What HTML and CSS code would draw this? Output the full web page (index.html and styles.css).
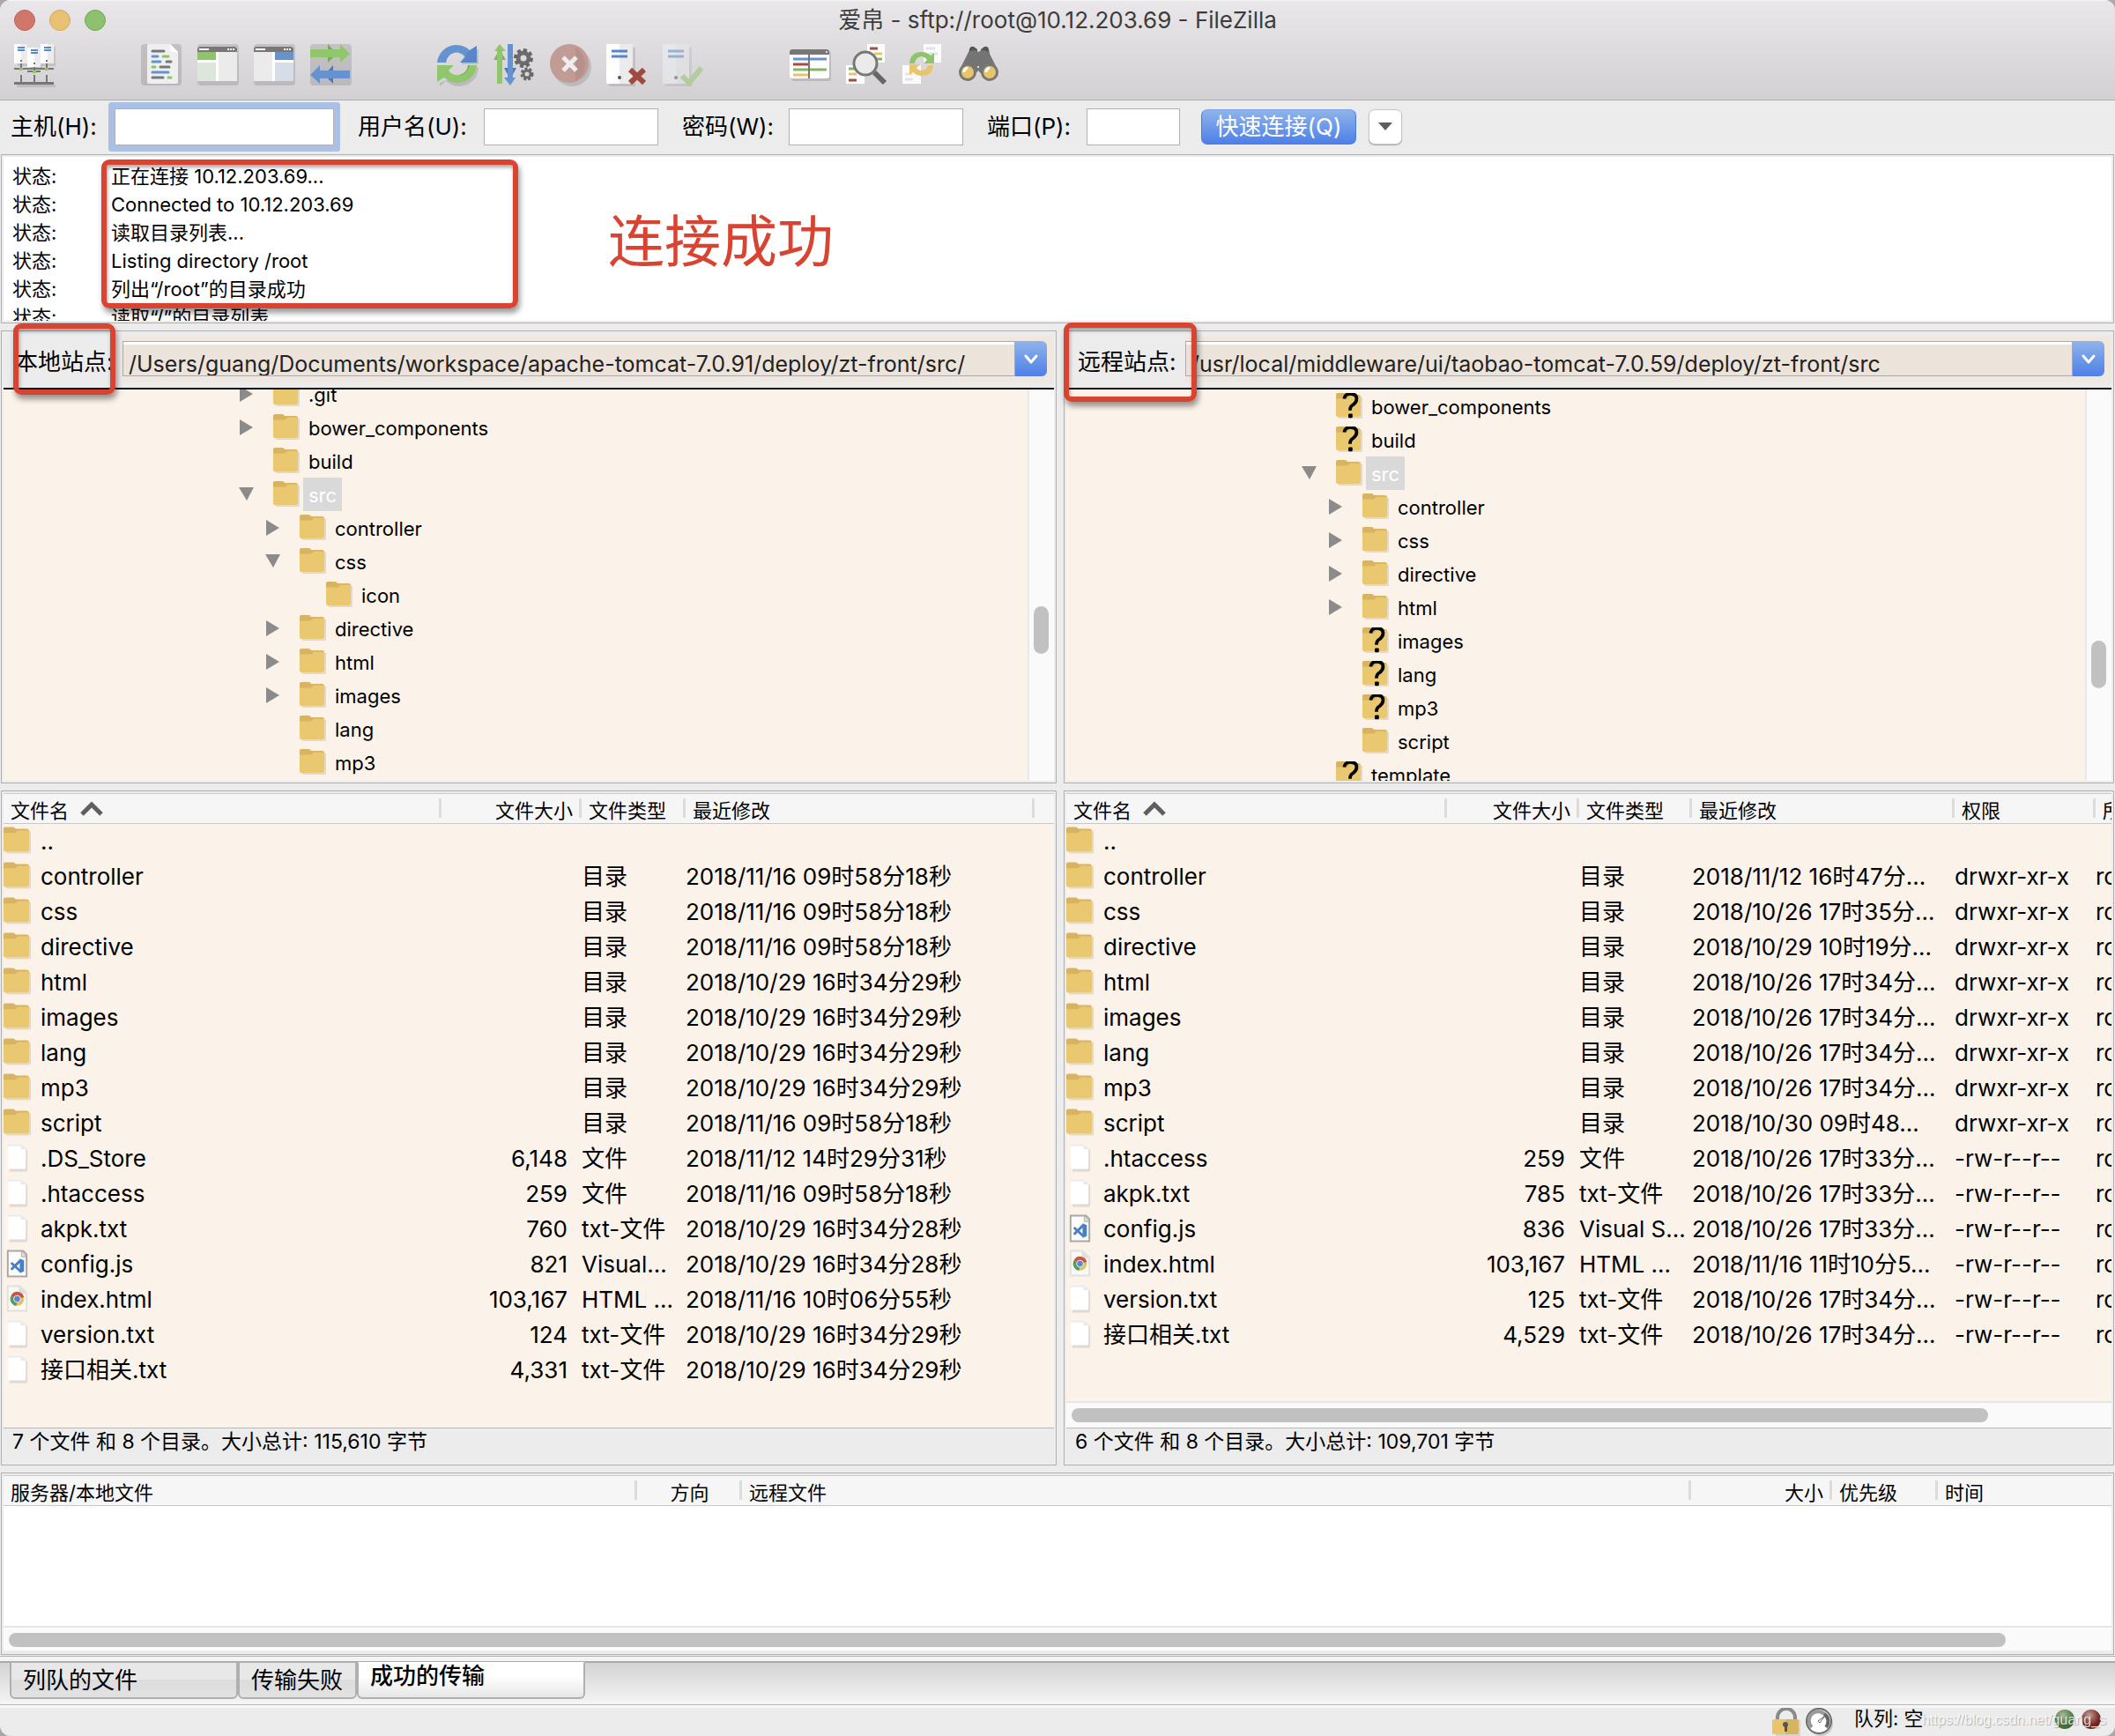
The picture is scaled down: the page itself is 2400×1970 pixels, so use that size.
FILE: index.html
```html
<!DOCTYPE html>
<html lang="zh-CN">
<head>
<meta charset="utf-8">
<title>爱帛 - sftp://root@10.12.203.69 - FileZilla</title>
<link rel="stylesheet" href="styles.css">
</head>
<body>
<svg class="sprite" aria-hidden="true">
  <symbol id="folder" viewBox="0 0 32 32">
    <path d="M2 29h28V5h2v24q0 2-2 2H4z" fill="#000" opacity=".1"/>
    <path d="M0 2q0-2 2-2h9q2 0 3 2h13q3 0 3 3v10H0z" fill="#d8b362"/>
    <path d="M0 7h13q2 0 3-2 0-1 2-1h10q2 0 2 2v20q0 3-3 3H3q-3 0-3-3z" fill="#eac870"/>
  </symbol>
  <symbol id="folder-unknown" viewBox="0 0 32 32">
    <use href="#folder" width="32" height="32"/>
    <path d="M10 7q1-6 7-6 8 0 8 6 0 4-4 7-4 2-4 7" fill="none" stroke="#000" stroke-width="4"/>
    <rect x="15" y="25" width="5" height="5" rx="1"/>
  </symbol>
  <symbol id="file" viewBox="0 0 32 32">
    <path d="M7 2h16l5 5v23q0 2-2 2H7z" fill="#000" opacity=".1"/>
    <path d="M5 2q0-2 2-2h13l6 6v21q0 2-2 2H7q-2 0-2-2z" fill="#fff"/>
    <path d="M20 0l6 6h-6zM5 0h15v2H5z" fill="#e9eaeb"/>
  </symbol>
  <symbol id="file-js" viewBox="0 0 32 32">
    <path d="M5 1h18l4 4v26H5z" fill="#fcfcfc" stroke="#aaa79f" stroke-width="2"/>
    <path d="M21 1l6 7h-6z" fill="#ddd" stroke="#b5b2ab"/>
    <path d="M9 15l11 10M9 23l11-11" stroke="#4a7fc5" stroke-width="3"/>
    <path d="M19 10l5 2v13l-5 2z" fill="#4a7fc5"/>
  </symbol>
  <symbol id="file-html" viewBox="0 0 32 32">
    <path d="M5 1h14l8 8v21H5z" fill="#f9f9f8" stroke="#e4e0da" stroke-width="2"/>
    <path d="M18 1l9 9h-9z" fill="#dfdfdd"/>
    <circle cx="16" cy="16" r="8" fill="#e6c25a"/>
    <path d="M16 16L9 12a8 8 0 0 0 6 12z" fill="#5a9a5b"/>
    <path d="M16 16l-7-4a8 8 0 0 1 15 2z" fill="#c8564b"/>
    <circle cx="16" cy="16" r="4" fill="#5d86cf" stroke="#e9eef7"/>
  </symbol>
  <symbol id="tri-right" viewBox="0 0 16 18"><path d="M0 0l15 9L0 18z" fill="#8b8b8b"/></symbol>
  <symbol id="tri-down" viewBox="0 0 18 16"><path d="M0 0h17L9 15z" fill="#8b8b8b"/></symbol>
  <symbol id="chevron" viewBox="0 0 36 40"><path d="M12 17l6 7 6-7" fill="none" stroke="#fff" stroke-width="3" stroke-linecap="round" stroke-linejoin="round"/></symbol>
  <symbol id="sort" viewBox="0 0 26 18"><path d="M2 15L13 4l11 11" fill="none" stroke="#5f5f5f" stroke-width="5"/></symbol>
</svg>

<div class="window">
  <header class="chrome">
    <div class="titlebar">
      <div class="lights">
        <button class="light close" aria-label="关闭"></button>
        <button class="light minimise" aria-label="最小化"></button>
        <button class="light zoom" aria-label="缩放"></button>
      </div>
      <h1 class="title">爱帛 - sftp://root@10.12.203.69 - FileZilla</h1>
    </div>
    <nav class="toolbar">
      <div class="group">
        <button class="tool" aria-label="站点管理器"><svg viewBox="0 0 48 48">
          <path d="M4 22v3h14v4h15v-4h14V3h-2v19M3 46h44v3H3z" fill="#000" opacity=".1"/>
          <path d="M0 0h15v22H0zM30 0h15v22H30zM15 4h15v22H15z" fill="#fff"/>
          <path d="M8 0h7v22H8zM38 0h7v22h-7zM23 4h7v22h-7z" fill="#ececec"/>
          <path d="M4 4h8M4 7h8M34 4h8M34 7h8M19 7h8M19 10h8" stroke="#5b8acb" stroke-width="2"/>
          <path d="M0 28h45M15 31h15M8 22v6M37 22v6M23 26v5M8 35v8M37 35v8M23 35v8" stroke="#777" stroke-width="2"/>
          <path d="M0 43h45v3H0z" fill="#777"/>
          <circle cx="8" cy="19" r="1" fill="#444"/><circle cx="37" cy="19" r="1" fill="#444"/><circle cx="23" cy="22" r="1" fill="#444"/>
          <path d="M6 27h4v3H6zM35 27h4v3h-4zM21 30h4v3h-4z" fill="#8dcb5e"/>
        </svg></button>
      </div>
      <div class="group">
        <button class="tool" aria-label="消息日志"><svg viewBox="0 0 48 48">
          <rect width="46" height="47" rx="4" fill="#000" opacity=".13"/>
          <path d="M9 0h24l9 9v34q0 2-2 2H9q-2 0-2-2V2q0-2 2-2z" fill="#efefef"/><path d="M33 0v7l2 2h7z" fill="#fff"/>
          <g fill="none" stroke-width="3" stroke-linecap="round"><path d="M13 8h13M29 20h5M22 26h10M13 38h12" stroke="#777"/><path d="M13 14h6M13 20h9M13 32h18" stroke="#6593cf"/><path d="M25 14h6M13 26h3M31 38h3" stroke="#8ec464"/></g>
        </svg></button>
        <button class="tool" aria-label="本地目录树"><svg viewBox="0 0 48 48">
          <rect width="47" height="47" rx="4" fill="#000" opacity=".12"/>
          <rect y="3" width="45" height="39" rx="3" fill="#fff"/><path d="M0 9V6q0-3 3-3h39q3 0 3 3v3z" fill="#777"/>
          <path d="M2 5h11v2H2zM34 5h2v2h-2zM37 5h2v2h-2zM40 5h2v2h-2z" fill="#fff"/>
          <path d="M0 9h21v9H0z" fill="#8ec46a"/><path d="M0 21h21v21H0z" fill="#dde6da"/><path d="M24 9h21v33H24z" fill="#ebebeb"/>
        </svg></button>
        <button class="tool" aria-label="远程目录树"><svg viewBox="0 0 48 48">
          <rect width="47" height="47" rx="4" fill="#000" opacity=".12"/>
          <rect y="3" width="45" height="39" rx="3" fill="#fff"/><path d="M0 9V6q0-3 3-3h39q3 0 3 3v3z" fill="#777"/>
          <path d="M2 5h11v2H2zM34 5h2v2h-2zM37 5h2v2h-2zM40 5h2v2h-2z" fill="#fff"/>
          <path d="M24 9h21v9H24z" fill="#6593cf"/><path d="M24 21h21v21H24z" fill="#d7dde6"/><path d="M0 9h21v33H0z" fill="#ebebeb"/>
        </svg></button>
        <button class="tool" aria-label="传输队列"><svg viewBox="0 0 48 48">
          <rect width="47" height="47" rx="4" fill="#000" opacity=".12"/>
          <path d="M20 0l10 11-10 10z" fill="#78ab58"/><path d="M0 6h34V0l11 11-11 10v-6H0z" fill="#91c76c"/>
          <path d="M26 24L16 35l10 10z" fill="#4d79bd"/><path d="M45 30H11v-6L0 35l11 10v-6h34z" fill="#6593cf"/>
        </svg></button>
      </div>
      <div class="group">
        <button class="tool" aria-label="刷新"><svg viewBox="0 0 48 48">
          <path d="M47 27A22 22 0 0 1 10 42l-7 6v-4l44-18zM45 6h2v17H28v-2h17z" fill="#000" opacity=".12"/>
          <path d="M10 21H0A22 22 0 0 1 37 7l8-5v19H26l6-6A12 12 0 0 0 10 21z" fill="#6593cf"/><path d="M37 7l8-5v19H26z" fill="#4d79bd" opacity=".5"/><path d="M10 21q0-9 12-12-9 1-13 12z" fill="#4d79bd"/>
          <path d="M35 24h10A22 22 0 0 1 8 38l-8 5V24h19l-6 6a12 12 0 0 0 22-6z" fill="#91c76c"/><path d="M35 24q0 9-12 12 11 0 14-12z" fill="#78ab58"/>
        </svg></button>
        <button class="tool" aria-label="处理队列"><svg viewBox="0 0 48 48">
          <path d="M7 0l7 8H1z" fill="#91c76c"/><path d="M7 6l7 12H0z" fill="#7db75a"/><path d="M4 7h6v38H4z" fill="#91c76c"/>
          <path d="M12 27h14l-7 13z" fill="#4d79bd"/><path d="M16 0h6v38h3l-6 9-7-9h4z" fill="#6593cf"/>
          <circle cx="34" cy="16" r="6" fill="none" stroke="#6d6d6d" stroke-width="5"/><circle cx="34" cy="16" r="9" fill="none" stroke="#666" stroke-width="4" stroke-dasharray="4 3"/>
          <circle cx="38" cy="34" r="4" fill="none" stroke="#6d6d6d" stroke-width="3"/><circle cx="38" cy="34" r="6" fill="none" stroke="#666" stroke-width="3" stroke-dasharray="3 2"/>
        </svg></button>
        <button class="tool" aria-label="取消"><svg viewBox="0 0 48 48">
          <circle cx="25" cy="26" r="22" fill="#000" opacity=".12"/><circle cx="22" cy="22" r="22" fill="#c09c94"/><path d="M29 4a22 22 0 0 1 0 38z" fill="#ad8b84" opacity=".6"/>
          <path d="M15 15l15 15M30 15L15 30" stroke="#eee" stroke-width="5"/>
        </svg></button>
        <button class="tool" aria-label="断开连接"><svg viewBox="0 0 48 48">
          <path d="M3 45v3h30V4h-3v41z" fill="#000" opacity=".1"/><rect width="30" height="45" rx="1" fill="#fff"/><path d="M15 0h14q1 0 1 1v43q0 1-1 1H15z" fill="#ebebeb"/>
          <path d="M6 8h18M6 14h18" stroke="#5686ca" stroke-width="3"/><circle cx="15" cy="38" r="2" fill="#555"/>
          <path d="M27 29l16 15M43 29L27 44" stroke="#a04a3f" stroke-width="6"/>
        </svg></button>
        <button class="tool" aria-label="重新连接"><svg viewBox="0 0 48 48">
          <g opacity=".5"><path d="M3 45v3h30V4h-3v41z" fill="#000" opacity=".12"/><rect width="30" height="45" rx="1" fill="#eef3f5"/><path d="M15 0h14q1 0 1 1v43q0 1-1 1H15z" fill="#e6e8e9"/>
          <path d="M6 8h18M6 14h18" stroke="#5686ca" stroke-width="3"/><circle cx="15" cy="38" r="2" fill="#555"/>
          <path d="M22 36l8 8 14-17" fill="none" stroke="#8ec464" stroke-width="6"/></g>
        </svg></button>
      </div>
      <div class="group">
        <button class="tool" aria-label="过滤"><svg viewBox="0 0 48 48">
          <rect x="2" y="8" width="45" height="34" rx="3" fill="#000" opacity=".12"/><rect y="6" width="45" height="33" rx="3" fill="#fff"/><path d="M0 12V9q0-3 3-3h39q3 0 3 3v3z" fill="#777"/><circle cx="42" cy="9" r="1" fill="#fff"/>
          <g stroke-width="3"><path d="M4 17h38" stroke="#6593cf"/><path d="M4 23h18" stroke="#a64b3f"/><path d="M4 29h38" stroke="#82b660"/><path d="M4 35h18" stroke="#e9c46a"/></g><path d="M22 12v27" stroke="#777" stroke-width="2"/>
        </svg></button>
        <button class="tool" aria-label="目录比较"><svg viewBox="0 0 48 48">
          <path d="M24 0h20v21H24zM0 24h21v21H0z" fill="#fff"/><g stroke-width="3"><path d="M27 5h9M3 41h9" stroke="#a64b3f"/><path d="M32 11h9M3 34h9" stroke="#e9c46a"/><path d="M33 17h8M3 28h9" stroke="#82b660"/></g>
          <path d="M32 32l12 12" stroke="#666" stroke-width="6"/><circle cx="22" cy="22" r="13" fill="#ebebeb" stroke="#777" stroke-width="3"/>
        </svg></button>
        <button class="tool" aria-label="同步浏览"><svg viewBox="0 0 48 48">
          <path d="M24 0h20v21H24zM0 24h21v21H0z" fill="#fbfbfb"/><path d="M27 5h10M30 11h10M3 34h8M3 40h9" stroke="#e4e4e4" stroke-width="3"/>
          <path d="M14 22H8Q9 9 22 9q6 0 10 4l4-3v12H24l4-4q-3-4-7-4-6 1-7 8z" fill="#8ec46a"/><path d="M29 24h6q-1 12-13 12-6 0-10-4l-4 3V23h12l-4 4q3 4 7 3 5-1 6-6z" fill="#e9c46a"/>
        </svg></button>
        <button class="tool" aria-label="查找文件"><svg viewBox="0 0 48 48">
          <path d="M12 6q1-4 5-3l4 3v12H10zM34 6q-1-4-5-3l-4 3v12h11z" fill="#555"/><path d="M11 9q7-4 11 0 5-4 12 0l11 22-12 11-11-12-10 12L0 31z" fill="#747474"/>
          <circle cx="10" cy="32" r="10" fill="#777"/><circle cx="35" cy="32" r="10" fill="#777"/><circle cx="10" cy="32" r="7" fill="#e9c46a"/><circle cx="35" cy="32" r="7" fill="#e9c46a"/>
          <path d="M6 32q0-4 4-5M31 32q0-4 4-5" stroke="#fff" stroke-width="3" fill="none"/><circle cx="22" cy="26" r="1" fill="#fff"/>
        </svg></button>
      </div>
    </nav>
  </header>

  <form class="quick">
    <label for="host">主机(H):</label><input id="host" class="focused" type="text">
    <label for="user">用户名(U):</label><input id="user" type="text">
    <label for="pass">密码(W):</label><input id="pass" type="password">
    <label for="port">端口(P):</label><input id="port" type="text">
    <button class="connect" type="button">快速连接(Q)</button>
    <button class="history" type="button" aria-label="历史记录"><svg viewBox="0 0 16 10"><path d="M0 0h16L8 9z" fill="#5c5c5c"/></svg></button>
  </form>

  <main class="panes">
    <section class="frame log">
      <ul>
        <li><span>状态:</span>正在连接 10.12.203.69...</li>
        <li><span>状态:</span>Connected to 10.12.203.69</li>
        <li><span>状态:</span>读取目录列表...</li>
        <li><span>状态:</span>Listing directory /root</li>
        <li><span>状态:</span>列出“/root”的目录成功</li>
        <li><span>状态:</span>读取“/”的目录列表</li>
      </ul>
    </section>

    <section class="frame site">
      <div class="address local">
        <label for="local-path">本地站点:</label>
        <div class="combo"><select id="local-path"><option>/Users/guang/Documents/workspace/apache-tomcat-7.0.91/deploy/zt-front/src/</option></select><svg class="drop" aria-hidden="true"><use href="#chevron"/></svg></div>
      </div>
      <div class="tree-area">
        <ul class="tree end">
          <li class="l1"><svg class="tw"><use href="#tri-right"/></svg><svg class="ic"><use href="#folder"/></svg><span>.git</span></li>
          <li class="l1"><svg class="tw"><use href="#tri-right"/></svg><svg class="ic"><use href="#folder"/></svg><span>bower_components</span></li>
          <li class="l1"><svg class="tw"></svg><svg class="ic"><use href="#folder"/></svg><span>build</span></li>
          <li class="l1"><svg class="tw"><use href="#tri-down"/></svg><svg class="ic"><use href="#folder"/></svg><span class="sel">src</span></li>
          <li class="l2"><svg class="tw"><use href="#tri-right"/></svg><svg class="ic"><use href="#folder"/></svg><span>controller</span></li>
          <li class="l2"><svg class="tw"><use href="#tri-down"/></svg><svg class="ic"><use href="#folder"/></svg><span>css</span></li>
          <li class="l3"><svg class="tw"></svg><svg class="ic"><use href="#folder"/></svg><span>icon</span></li>
          <li class="l2"><svg class="tw"><use href="#tri-right"/></svg><svg class="ic"><use href="#folder"/></svg><span>directive</span></li>
          <li class="l2"><svg class="tw"><use href="#tri-right"/></svg><svg class="ic"><use href="#folder"/></svg><span>html</span></li>
          <li class="l2"><svg class="tw"><use href="#tri-right"/></svg><svg class="ic"><use href="#folder"/></svg><span>images</span></li>
          <li class="l2"><svg class="tw"></svg><svg class="ic"><use href="#folder"/></svg><span>lang</span></li>
          <li class="l2"><svg class="tw"></svg><svg class="ic"><use href="#folder"/></svg><span>mp3</span></li>
        </ul>
        <div class="vscroll local-scroll"><i></i></div>
      </div>
    </section>

    <section class="frame site">
      <div class="address remote">
        <label for="remote-path">远程站点:</label>
        <div class="combo"><select id="remote-path"><option>/usr/local/middleware/ui/taobao-tomcat-7.0.59/deploy/zt-front/src</option></select><svg class="drop" aria-hidden="true"><use href="#chevron"/></svg></div>
      </div>
      <div class="tree-area">
        <ul class="tree">
          <li class="l1"><svg class="tw"></svg><svg class="ic"><use href="#folder-unknown"/></svg><span>bower_components</span></li>
          <li class="l1"><svg class="tw"></svg><svg class="ic"><use href="#folder-unknown"/></svg><span>build</span></li>
          <li class="l1"><svg class="tw"><use href="#tri-down"/></svg><svg class="ic"><use href="#folder"/></svg><span class="sel">src</span></li>
          <li class="l2"><svg class="tw"><use href="#tri-right"/></svg><svg class="ic"><use href="#folder"/></svg><span>controller</span></li>
          <li class="l2"><svg class="tw"><use href="#tri-right"/></svg><svg class="ic"><use href="#folder"/></svg><span>css</span></li>
          <li class="l2"><svg class="tw"><use href="#tri-right"/></svg><svg class="ic"><use href="#folder"/></svg><span>directive</span></li>
          <li class="l2"><svg class="tw"><use href="#tri-right"/></svg><svg class="ic"><use href="#folder"/></svg><span>html</span></li>
          <li class="l2"><svg class="tw"></svg><svg class="ic"><use href="#folder-unknown"/></svg><span>images</span></li>
          <li class="l2"><svg class="tw"></svg><svg class="ic"><use href="#folder-unknown"/></svg><span>lang</span></li>
          <li class="l2"><svg class="tw"></svg><svg class="ic"><use href="#folder-unknown"/></svg><span>mp3</span></li>
          <li class="l2"><svg class="tw"></svg><svg class="ic"><use href="#folder"/></svg><span>script</span></li>
          <li class="l1"><svg class="tw"></svg><svg class="ic"><use href="#folder-unknown"/></svg><span>template</span></li>
        </ul>
        <div class="vscroll remote-scroll"><i></i></div>
      </div>
    </section>

    <section class="frame files">
      <div class="list list-local">
        <table>
          <colgroup><col class="w-name"><col class="w-size"><col class="w-type"><col class="w-date"><col></colgroup>
          <thead><tr><th>文件名<svg class="sort"><use href="#sort"/></svg></th><th class="num">文件大小</th><th>文件类型</th><th>最近修改</th><th></th></tr></thead>
          <tbody>
            <tr><td><svg class="ic"><use href="#folder"/></svg>..</td><td></td><td></td><td></td><td></td></tr>
            <tr><td><svg class="ic"><use href="#folder"/></svg>controller</td><td></td><td>目录</td><td>2018/11/16 09时58分18秒</td><td></td></tr>
            <tr><td><svg class="ic"><use href="#folder"/></svg>css</td><td></td><td>目录</td><td>2018/11/16 09时58分18秒</td><td></td></tr>
            <tr><td><svg class="ic"><use href="#folder"/></svg>directive</td><td></td><td>目录</td><td>2018/11/16 09时58分18秒</td><td></td></tr>
            <tr><td><svg class="ic"><use href="#folder"/></svg>html</td><td></td><td>目录</td><td>2018/10/29 16时34分29秒</td><td></td></tr>
            <tr><td><svg class="ic"><use href="#folder"/></svg>images</td><td></td><td>目录</td><td>2018/10/29 16时34分29秒</td><td></td></tr>
            <tr><td><svg class="ic"><use href="#folder"/></svg>lang</td><td></td><td>目录</td><td>2018/10/29 16时34分29秒</td><td></td></tr>
            <tr><td><svg class="ic"><use href="#folder"/></svg>mp3</td><td></td><td>目录</td><td>2018/10/29 16时34分29秒</td><td></td></tr>
            <tr><td><svg class="ic"><use href="#folder"/></svg>script</td><td></td><td>目录</td><td>2018/11/16 09时58分18秒</td><td></td></tr>
            <tr><td><svg class="ic"><use href="#file"/></svg>.DS_Store</td><td class="num">6,148</td><td>文件</td><td>2018/11/12 14时29分31秒</td><td></td></tr>
            <tr><td><svg class="ic"><use href="#file"/></svg>.htaccess</td><td class="num">259</td><td>文件</td><td>2018/11/16 09时58分18秒</td><td></td></tr>
            <tr><td><svg class="ic"><use href="#file"/></svg>akpk.txt</td><td class="num">760</td><td>txt-文件</td><td>2018/10/29 16时34分28秒</td><td></td></tr>
            <tr><td><svg class="ic"><use href="#file-js"/></svg>config.js</td><td class="num">821</td><td>Visual...</td><td>2018/10/29 16时34分28秒</td><td></td></tr>
            <tr><td><svg class="ic"><use href="#file-html"/></svg>index.html</td><td class="num">103,167</td><td>HTML ...</td><td>2018/11/16 10时06分55秒</td><td></td></tr>
            <tr><td><svg class="ic"><use href="#file"/></svg>version.txt</td><td class="num">124</td><td>txt-文件</td><td>2018/10/29 16时34分29秒</td><td></td></tr>
            <tr><td><svg class="ic"><use href="#file"/></svg>接口相关.txt</td><td class="num">4,331</td><td>txt-文件</td><td>2018/10/29 16时34分29秒</td><td></td></tr>
          </tbody>
        </table>
      </div>
      <p class="summary">7 个文件 和 8 个目录。大小总计: 115,610 字节</p>
    </section>

    <section class="frame files">
      <div class="list">
        <table>
          <colgroup><col class="w-rname"><col class="w-rsize"><col class="w-rtype"><col class="w-rdate"><col class="w-perm"><col></colgroup>
          <thead><tr><th>文件名<svg class="sort"><use href="#sort"/></svg></th><th class="num">文件大小</th><th>文件类型</th><th>最近修改</th><th>权限</th><th>所有者/组</th></tr></thead>
          <tbody>
            <tr><td><svg class="ic"><use href="#folder"/></svg>..</td><td></td><td></td><td></td><td></td><td></td></tr>
            <tr><td><svg class="ic"><use href="#folder"/></svg>controller</td><td></td><td>目录</td><td>2018/11/12 16时47分...</td><td>drwxr-xr-x</td><td>root</td></tr>
            <tr><td><svg class="ic"><use href="#folder"/></svg>css</td><td></td><td>目录</td><td>2018/10/26 17时35分...</td><td>drwxr-xr-x</td><td>root</td></tr>
            <tr><td><svg class="ic"><use href="#folder"/></svg>directive</td><td></td><td>目录</td><td>2018/10/29 10时19分...</td><td>drwxr-xr-x</td><td>root</td></tr>
            <tr><td><svg class="ic"><use href="#folder"/></svg>html</td><td></td><td>目录</td><td>2018/10/26 17时34分...</td><td>drwxr-xr-x</td><td>root</td></tr>
            <tr><td><svg class="ic"><use href="#folder"/></svg>images</td><td></td><td>目录</td><td>2018/10/26 17时34分...</td><td>drwxr-xr-x</td><td>root</td></tr>
            <tr><td><svg class="ic"><use href="#folder"/></svg>lang</td><td></td><td>目录</td><td>2018/10/26 17时34分...</td><td>drwxr-xr-x</td><td>root</td></tr>
            <tr><td><svg class="ic"><use href="#folder"/></svg>mp3</td><td></td><td>目录</td><td>2018/10/26 17时34分...</td><td>drwxr-xr-x</td><td>root</td></tr>
            <tr><td><svg class="ic"><use href="#folder"/></svg>script</td><td></td><td>目录</td><td>2018/10/30 09时48...</td><td>drwxr-xr-x</td><td>root</td></tr>
            <tr><td><svg class="ic"><use href="#file"/></svg>.htaccess</td><td class="num">259</td><td>文件</td><td>2018/10/26 17时33分...</td><td>-rw-r--r--</td><td>root</td></tr>
            <tr><td><svg class="ic"><use href="#file"/></svg>akpk.txt</td><td class="num">785</td><td>txt-文件</td><td>2018/10/26 17时33分...</td><td>-rw-r--r--</td><td>root</td></tr>
            <tr><td><svg class="ic"><use href="#file-js"/></svg>config.js</td><td class="num">836</td><td>Visual S...</td><td>2018/10/26 17时33分...</td><td>-rw-r--r--</td><td>root</td></tr>
            <tr><td><svg class="ic"><use href="#file-html"/></svg>index.html</td><td class="num">103,167</td><td>HTML ...</td><td>2018/11/16 11时10分5...</td><td>-rw-r--r--</td><td>root</td></tr>
            <tr><td><svg class="ic"><use href="#file"/></svg>version.txt</td><td class="num">125</td><td>txt-文件</td><td>2018/10/26 17时34分...</td><td>-rw-r--r--</td><td>root</td></tr>
            <tr><td><svg class="ic"><use href="#file"/></svg>接口相关.txt</td><td class="num">4,529</td><td>txt-文件</td><td>2018/10/26 17时34分...</td><td>-rw-r--r--</td><td>root</td></tr>
          </tbody>
        </table>
      </div>
      <div class="hscroll remote-h"><i></i></div>
      <p class="summary">6 个文件 和 8 个目录。大小总计: 109,701 字节</p>
    </section>

    <section class="frame queue">
      <table>
        <colgroup><col class="q-server"><col class="q-dir"><col><col class="q-size"><col class="q-prio"><col class="q-time"></colgroup>
        <thead><tr><th>服务器/本地文件</th><th class="mid">方向</th><th>远程文件</th><th class="num">大小</th><th>优先级</th><th>时间</th></tr></thead>
      </table>
      <div class="queue-body"></div>
      <div class="hscroll queue-h"><i></i></div>
    </section>

    <div class="mark mark-log"></div>
    <div class="mark mark-local"></div>
    <div class="mark mark-remote"></div>
    <strong class="mark-text">连接成功</strong>
  </main>

  <div class="tabs">
    <button class="tab wide">列队的文件</button>
    <button class="tab">传输失败</button>
    <button class="tab wide active">成功的传输</button>
  </div>

  <footer class="status">
    <svg class="badge" viewBox="0 0 32 32"><path d="M6 14v-3a10 10 0 0 1 20 0v3" fill="none" stroke="#8a8a8a" stroke-width="4"/><path d="M4 14h28v18H4z" fill="#000" opacity=".1"/><rect y="13" width="30" height="17" rx="2" fill="#e9c46a"/><path d="M15 13h13q2 0 2 2v13q0 2-2 2H15z" fill="#d8b45f"/><circle cx="15" cy="19" r="3" fill="#555"/><path d="M14 19h3v8h-3z" fill="#555"/></svg>
    <svg class="badge" viewBox="0 0 32 32"><circle cx="17" cy="18" r="14" fill="#000" opacity=".15"/><circle cx="15" cy="15" r="14" fill="#fff" stroke="#6b6b6b" stroke-width="2"/><path d="M7 22A10 10 0 0 1 21 7" fill="none" stroke="#999" stroke-width="4"/><path d="M21 7a10 10 0 0 1 2 15" fill="none" stroke="#666" stroke-width="4"/><path d="M14 15l8-6-6 8z" fill="#fff" stroke="#666"/></svg>
    <span class="queue-state">队列: 空</span>
    <i class="led green"></i>
    <i class="led red"></i>
    <span class="credit">https://blog.csdn.net/guang_s</span>
  </footer>
</div>
</body>
</html>
```
FILE: styles.css
```css
* { box-sizing: border-box; }

body {
  margin: 0;
  background: #a9a9a9;
  color: #000;
  font: 26px/40px Inter, "Noto Sans CJK SC", sans-serif;
}

button, input, select { font: inherit; color: inherit; margin: 0; }
ul { list-style: none; margin: 0; padding: 0; }
p, h1 { margin: 0; }
.sprite { display: none; }

.window {
  display: flex;
  flex-direction: column;
  min-height: 100vh;
  background: #ececec;
  border-radius: 12px;
  overflow: hidden;
}

/* title bar and toolbar */
.chrome {
  height: 114px;
  background: linear-gradient(#e9e7ea, #d2d0d3);
  border-bottom: 1px solid #adadad;
  box-shadow: inset 0 1px #f6f5f6;
}
.titlebar {
  display: grid;
  grid-template-columns: 1fr auto 1fr;
  align-items: center;
  height: 46px;
  padding: 0 16px;
}
.lights { display: flex; gap: 16px; }
.light {
  width: 24px;
  height: 24px;
  padding: 0;
  border: 1px solid;
  border-radius: 50%;
}
.close { background: #d1766a; border-color: #bd6357; }
.minimise { background: #e9c173; border-color: #cfa75c; }
.zoom { background: #8dc06f; border-color: #73a656; }
.title { font-size: 26px; font-weight: 400; color: #3c3c3c; }
.toolbar { display: flex; gap: 80px; padding: 4px 8px; }
.group { display: flex; }
.tool { width: 64px; height: 48px; padding: 0 8px; border: 0; background: none; }
.tool svg { display: block; width: 48px; height: 48px; overflow: visible; }

/* quick connect */
.quick {
  display: grid;
  grid-template-columns: 130px 249px 170px 198px 148px 198px 140px 106px auto auto;
  justify-content: start;
  align-items: center;
  height: 61px;
  padding-bottom: 2px;
}
.quick label { padding-left: 27px; }
.quick label:first-child { padding-left: 12px; }
.quick input {
  width: 100%;
  height: 42px;
  padding: 0 6px;
  border: 1px solid #b1b1b1;
  background: #fff;
  outline: 0;
}
.quick .focused { box-shadow: 0 0 0 7px #a9c1e7; border-radius: 1px; }
.connect {
  width: 176px;
  height: 40px;
  margin-left: 24px;
  padding: 0;
  border: 1px solid #4c7ce0;
  border-top-color: #7ba3e6;
  border-radius: 7px;
  background: linear-gradient(#8fb3ea, #4d80e8);
  color: #fff;
  line-height: 36px;
}
.history {
  display: grid;
  place-items: center;
  width: 38px;
  height: 40px;
  margin-left: 14px;
  padding: 0;
  border: 1px solid #c6c6c6;
  border-radius: 7px;
  background: #fff;
  box-shadow: 0 1px 1px #aaa;
}
.history svg { width: 16px; height: 10px; }

/* pane grid */
.panes {
  position: relative;
  flex: 1;
  display: grid;
  grid-template-columns: 1198fr 1192fr;
  grid-template-rows: auto auto auto 1fr;
  gap: 8px;
  padding: 0 1px;
}
.frame {
  display: flex;
  flex-direction: column;
  min-width: 0;
  border: 1px solid #b0b0b0;
  padding: 2px;
}
.log, .queue { grid-column: 1 / -1; }
.log { height: 192px; font-size: 22px; line-height: 32px; }
.log ul { flex: 1; min-height: 0; overflow: hidden; background: #fff; padding: 6px 10px; }
.log li { display: flex; }
.log span { width: 112px; }

.site { padding-top: 0; }
.address { display: flex; align-items: center; height: 64px; }
.local { padding-left: 13px; }
.remote { padding-left: 13px; }
.address label { flex: none; width: 122px; padding-top: 5px; }
.combo {
  flex: 1;
  display: flex;
  min-width: 0;
  padding: 5px 8px 7px 0;
  background: #f0e8e0;
}
.combo select {
  flex: 1;
  min-width: 0;
  height: 40px;
  padding: 5px 6px 0;
  border: 1px solid #aaa;
  border-radius: 0;
  appearance: none;
  background: #ece4db;
  box-shadow: inset 0 3px #fff;
  color: #222;
  font-size: 25px;
}
.drop { flex: none; width: 36px; height: 40px; border-radius: 0 6px 6px 0; background: linear-gradient(#8fb3ea, #4d80e8); }

.tree-area {
  display: flex;
  height: 446px;
  border-top: 2px solid #111;
  background: #fbf2e9;
  font-size: 22px;
  line-height: 38px;
}
.tree { flex: 1; display: flex; flex-direction: column; overflow: hidden; }
.tree.end { justify-content: flex-end; padding-bottom: 2px; }
.tree li { display: flex; flex: none; height: 38px; padding-left: 266px; }
.tree .l2 { padding-left: 296px; }
.tree .l3 { padding-left: 326px; }
.tw { flex: none; width: 18px; height: 18px; margin: 10px 21px 0 1px; }
.ic { flex: none; width: 32px; height: 32px; }
.tree .ic { width: 30px; height: 30px; margin: 4px 4px 0 0; }
.tree li span { padding: 2px 6px 0; line-height: 36px; }
.tree .sel { background: #d9d9d9; color: #fff; }
.vscroll { width: 30px; padding: 0 6px 0 5px; border-left: 2px solid #e8e8e8; background: #fafafa; }
.vscroll i { display: block; width: 17px; height: 54px; border-radius: 9px; background: #c1c1c1; }
.local-scroll { padding-top: 246px; }
.remote-scroll { padding-top: 285px; }

/* tables */
table { width: 100%; table-layout: fixed; border-collapse: collapse; }
th, td { overflow: hidden; padding: 0; text-align: left; font-weight: 400; white-space: nowrap; }
th {
  height: 34px;
  padding: 4px 8px 0;
  border-top: 1px solid #ccc;
  border-bottom: 1px solid #c8c8c8;
  background: linear-gradient(#dcdcdc, #dcdcdc) right 5px / 3px 22px no-repeat #f6f6f6;
  font-size: 22px;
  line-height: 28px;
}
th:last-child { background-image: none; }
td { height: 40px; }
td .ic { width: 31px; height: 32px; margin: 0 11px 0 0; vertical-align: -6px; }
th.num { padding-right: 10px; }
.num { text-align: right; }
td.num { padding-right: 16px; }
.mid { text-align: center; }
.sort { width: 26px; height: 18px; margin-left: 13px; vertical-align: 1px; }
.w-name { width: 497px; }
.w-size { width: 159px; }
.w-type { width: 118px; }
.w-date { width: 396px; }
.w-rname { width: 432px; }
.w-rsize { width: 150px; }
.w-rtype { width: 128px; }
.w-rdate { width: 298px; }
.w-perm { width: 160px; }
.q-server { width: 719px; }
.q-dir { width: 119px; }
.q-size { width: 160px; }
.q-prio { width: 120px; }
.q-time { width: 197px; }
.list { flex: 1; background: #fbf2e9; }
.list-local { padding-bottom: 45px; }
.summary { height: 40px; padding: 0 10px; border-top: 1px solid #b8b8b8; font-size: 23px; line-height: 30px; }

.hscroll { height: 30px; padding: 6px 0 0 6px; border-top: 2px solid #e6e6e6; background: #fafafa; }
.hscroll i { display: block; height: 16px; border-radius: 8px; background: #c1c1c1; }
.remote-h { padding-right: 140px; }
.queue-h { padding-right: 120px; }
.queue { padding-bottom: 4px; }
.queue-body { flex: 1; background: #fff; }
.queue-h { height: 28px; }

/* annotations over the log and the address labels */
.mark {
  position: absolute;
  border: 6px solid #d94331;
  border-radius: 9px;
  box-shadow: 2px 5px 6px #0006, inset 1px 3px 4px #0005;
}
.mark-log { left: 115px; top: 6px; width: 473px; height: 169px; }
.mark-local { left: 15px; top: 192px; width: 116px; height: 81px; }
.mark-remote { left: 1207px; top: 191px; width: 151px; height: 90px; }
.mark-text { position: absolute; left: 690px; top: 59px; color: #d94331; font-size: 64px; font-weight: 400; line-height: 80px; }

/* bottom tabs and status bar */
.tabs {
  display: flex;
  align-items: flex-start;
  height: 56px;
  margin-top: 1px;
  padding: 0 11px;
  border-top: 1px solid #b0b0b0;
  border-bottom: 1px solid #b4b4b4;
  background: linear-gradient(#f4f4f4 5px, #aaa 5px, #aaa 7px, #d3d3d3 7px, #f5f5f5);
}
.tab {
  height: 42px;
  margin-top: 6px;
  padding: 0 14px 0 13px;
  border: 2px solid #b0b0b0;
  border-top-width: 1px;
  border-radius: 0 0 6px 6px;
  background: linear-gradient(#e8e8e8 50%, #dcdcdc 50%, #e2e2e2);
  line-height: 38px;
  text-align: left;
}
.tab.wide { width: 259px; }
.tab.active { border-top-color: #fff; background: linear-gradient(#fff 40%, #e6e6e6); font-weight: 500; line-height: 28px; padding-bottom: 10px; }
.status {
  position: relative;
  display: flex;
  align-items: flex-start;
  height: 35px;
  padding: 3px 16px 0;
  font-size: 22px;
  line-height: 24px;
  box-shadow: inset 0 3px #f8f8f8;
}
.badge { width: 32px; height: 32px; margin-right: 6px; }
.badge:first-child { margin-left: auto; }
.queue-state { width: 228px; margin-left: 17px; }
.led { width: 22px; height: 22px; margin: 2px 0 0 8px; border-radius: 50%; }
.queue-state + .led { margin-left: 0; }
.green { background: radial-gradient(circle at 40% 30%, #a9bba0, #4c7a3b 55%, #2c5020); }
.red { background: radial-gradient(circle at 40% 30%, #c0a09c, #7b2a22 55%, #45130e); }
.credit {
  position: absolute;
  right: 10px;
  top: 5px;
  color: #fffc;
  font: 16px/24px "Liberation Sans", Arial, sans-serif;
  text-shadow: 1px 1px 1px #0004;
}
```
